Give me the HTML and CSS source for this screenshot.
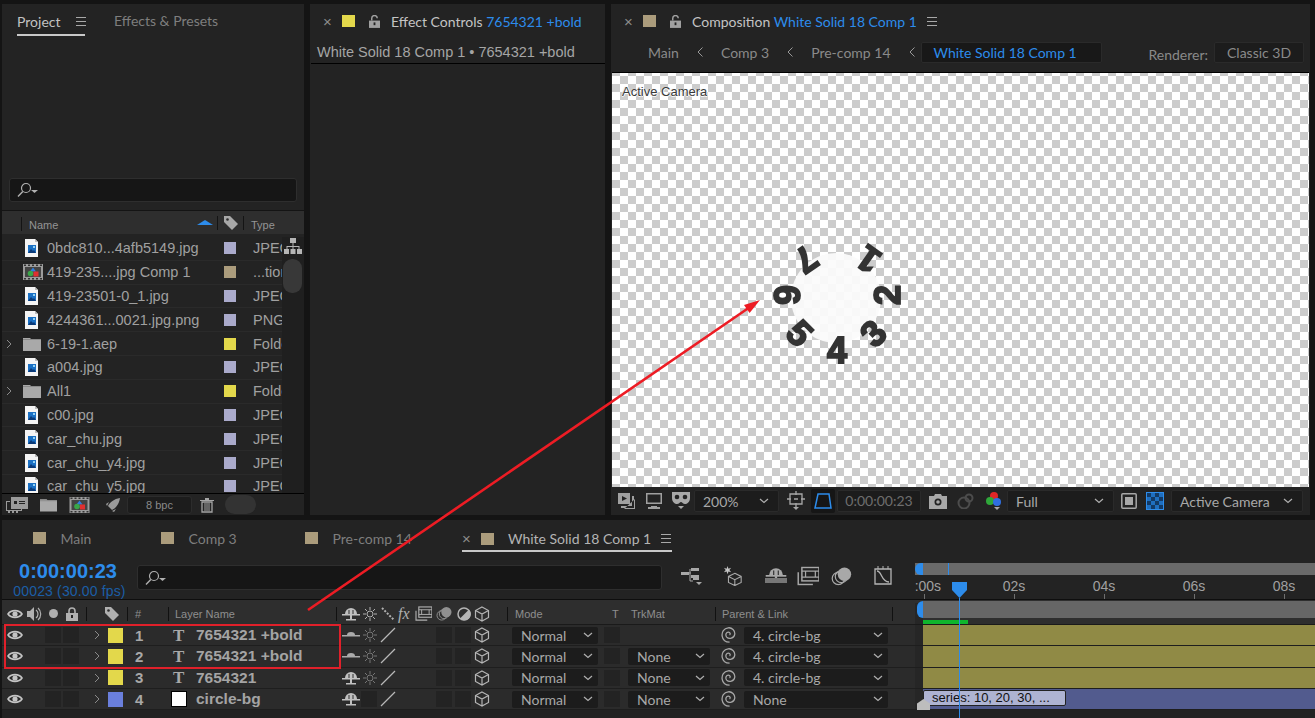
FILE: index.html
```html
<!DOCTYPE html>
<html lang="en">
<head>
  <meta charset="UTF-8">
  <title>White Solid 18 Comp 1</title>
  <link rel="stylesheet" href="styles.css">
</head>
<body>

  <!-- shared icons -->
  <svg class="defs" width="0" height="0">
    <symbol id="i-eye" viewBox="0 0 16 16"><path d="M1 8C4 3.5 12 3.5 15 8 12 12.5 4 12.5 1 8Z" fill="none" stroke="currentColor" stroke-width="1.6"/><circle cx="8" cy="8" r="2.6" fill="currentColor"/></symbol>
    <symbol id="i-chev" viewBox="0 0 8 12"><path d="M2 2l4 4-4 4" fill="none" stroke="currentColor" stroke-width="1"/></symbol>
    <symbol id="i-down" viewBox="0 0 12 8"><path d="M2 2l4 3.5L10 2" fill="none" stroke="currentColor" stroke-width="1.2"/></symbol>
    <symbol id="i-file" viewBox="0 0 13 18"><path d="M0 0h10l3 3v15H0z" fill="#f4f4f4"/><path d="M10 0v3h3z" fill="#bbb"/><rect x="3" y="6" width="8" height="8" fill="#1a70c4"/><path d="M3 14l3-4 2 2 1-1 2 3z" fill="#0b3a78"/><rect x="8" y="7" width="2" height="2" fill="#8fd0f5"/></symbol>
    <symbol id="i-folder" viewBox="0 0 18 14"><path d="M0 2V1h7l1 1h10v12H0z" fill="#a9a9a9"/><rect y="2" width="18" height="1" fill="#8b8b8b"/></symbol>
    <symbol id="i-comp" viewBox="0 0 20 16"><rect width="20" height="16" fill="#9c9c9c"/><path d="M1 .5h2v1.500H1zM5 .5h2v1.500H5zM9 .5h2v1.500H9zM13 .5h2v1.500h-2zM17 .5h2v1.500h-2zM1 14h2v1.500H1zM5 14h2v1.500H5zM9 14h2v1.500H9zM13 14h2v1.500h-2zM17 14h2v1.500h-2z" fill="#333"/><rect x="2" y="3" width="16" height="10" fill="#444"/><path d="M10 3.500l3 4H7z" fill="#2f7fe0"/><circle cx="7.500" cy="9.500" r="2.800" fill="#3aa648"/><rect x="10.500" y="7.500" width="5" height="5" fill="#e03030"/></symbol>
    <symbol id="i-lock" viewBox="0 0 12 14"><path d="M3 6V4a3 3 0 0 1 6 0v2" fill="none" stroke="currentColor" stroke-width="1.6"/><path d="M0 6h12v8H0z" fill="currentColor"/><rect x="5" y="8" width="2" height="3" fill="#232323"/></symbol>
    <symbol id="i-unlock" viewBox="0 0 12 14"><path d="M3 6V3.5a3 3 0 0 1 6 0" fill="none" stroke="currentColor" stroke-width="1.6"/><path d="M0 6h12v8H0z" fill="currentColor"/><rect x="5" y="8" width="2" height="3" fill="#232323"/></symbol>
    <symbol id="i-tag" viewBox="0 0 16 16"><path d="M1 1h6l8 8-6 6-8-8z" fill="currentColor"/><circle cx="4.500" cy="4.500" r="1.300" fill="#2e2e2e"/></symbol>
    <symbol id="i-search" viewBox="0 0 22 16"><circle cx="9" cy="6" r="4.500" fill="none" stroke="currentColor" stroke-width="1.200"/><path d="M5.800 9.400L1 14.500" stroke="currentColor" stroke-width="1.400"/><path d="M14 8h7l-3.500 3z" fill="currentColor"/></symbol>
    <symbol id="i-shy" viewBox="0 0 18 14"><path d="M3 7a6 6 0 0 1 12 0z" fill="currentColor"/><path d="M7 3v4M11 3v4" stroke="#2e2e2e"/><rect y="7" width="18" height="1.500" fill="currentColor"/><rect x="8" y="8" width="2" height="4" fill="currentColor"/><rect x="4" y="12" width="10" height="1.500" fill="currentColor"/></symbol>
    <symbol id="i-shyoff" viewBox="0 0 18 14"><path d="M5 7a4 3 0 0 1 8 0z" fill="currentColor"/><rect y="7" width="18" height="1.500" fill="currentColor"/></symbol>
    <symbol id="i-sun" viewBox="0 0 14 14"><circle cx="7" cy="7" r="3" fill="none" stroke="currentColor"/><path d="M7 0v3M7 11v3M0 7h3M11 7h3M2 2l2 2M10 10l2 2M12 2l-2 2M4 10l-2 2" stroke="currentColor"/></symbol>
    <symbol id="i-slash" viewBox="0 0 16 16"><path d="M1 15L15 1" stroke="currentColor" stroke-width="1.300"/></symbol>
    <symbol id="i-cube" viewBox="0 0 16 16"><path d="M8 1l6.500 3.500v7L8 15l-6.500-3.500v-7zM1.500 4.500L8 8l6.500-3.500M8 8v7" fill="none" stroke="currentColor" stroke-width="1.200"/></symbol>
    <symbol id="i-spiral" viewBox="1 1.500 13 14"><path d="M8 8.500c1-.8.500-2.500-1-2.500-2 0-3 2.500-1.500 4.300C7.500 12.500 12 11.500 12.500 8 13 4.500 10 1.800 6.800 2.200 3 2.700 1 6 1.500 9.500 2 12.500 4.500 14.800 8 14.800" fill="none" stroke="currentColor" stroke-width="1.100"/></symbol>
    <symbol id="i-stack" viewBox="0 0 18 16"><circle cx="6" cy="10" r="5" fill="none" stroke="currentColor"/><circle cx="8.500" cy="8.500" r="5" fill="none" stroke="currentColor"/><circle cx="11" cy="6.500" r="5.500" fill="currentColor"/></symbol>
    <symbol id="i-film" viewBox="0 0 18 16"><rect x="4" y="1" width="14" height="11" fill="none" stroke="currentColor" stroke-width="1.200"/><path d="M4 4h14M4 9h14M7 4v5M15 4v5" stroke="currentColor"/><path d="M1 5v10h12" fill="none" stroke="currentColor" stroke-width="1.200"/></symbol>
    <symbol id="burger" viewBox="0 0 10 9"><path d="M0 0h10v1H0zM0 4h10v1H0zM0 8h10v1H0z" fill="#a8a8a8"/></symbol>
    <symbol id="i-back" viewBox="0 0 8 12"><path d="M6.500 1.500L2 6l4.500 4.500" fill="none" stroke="currentColor"/></symbol>
  </svg>

  <main class="top">

    <section class="panel project">
      <div class="project-tabs">
        <span class="tab-active">Project <svg class="burger"><use href="#burger"/></svg></span>
        <span class="tab-off">Effects &amp; Presets</span>
      </div>
      <div class="search project-search"><svg class="i-search"><use href="#i-search"/></svg></div>
      <div class="list-head">
        <span class="head-name">Name</span>
        <span class="sort-arrow"></span>
        <i class="head-sep"></i>
        <svg class="i-tag"><use href="#i-tag"/></svg>
        <i class="head-sep"></i>
        <span class="head-type">Type</span>
      </div>
      <div class="list-wrap">
        <div class="list">
          <div class="item"><span></span><svg class="i-file"><use href="#i-file"/></svg><span>0bdc810...4afb5149.jpg</span><i class="chip c-lav"></i><span>JPEG</span></div>
          <div class="item"><span></span><svg class="i-comp"><use href="#i-comp"/></svg><span>419-235....jpg Comp 1</span><i class="chip c-tan"></i><span>...tion</span></div>
          <div class="item"><span></span><svg class="i-file"><use href="#i-file"/></svg><span>419-23501-0_1.jpg</span><i class="chip c-lav"></i><span>JPEG</span></div>
          <div class="item"><span></span><svg class="i-file"><use href="#i-file"/></svg><span>4244361...0021.jpg.png</span><i class="chip c-lav"></i><span>PNG</span></div>
          <div class="item"><svg class="i-chev"><use href="#i-chev"/></svg><svg class="i-folder"><use href="#i-folder"/></svg><span>6-19-1.aep</span><i class="chip c-yel"></i><span>Folder</span></div>
          <div class="item"><span></span><svg class="i-file"><use href="#i-file"/></svg><span>a004.jpg</span><i class="chip c-lav"></i><span>JPEG</span></div>
          <div class="item"><svg class="i-chev"><use href="#i-chev"/></svg><svg class="i-folder"><use href="#i-folder"/></svg><span>All1</span><i class="chip c-yel"></i><span>Folder</span></div>
          <div class="item"><span></span><svg class="i-file"><use href="#i-file"/></svg><span>c00.jpg</span><i class="chip c-lav"></i><span>JPEG</span></div>
          <div class="item"><span></span><svg class="i-file"><use href="#i-file"/></svg><span>car_chu.jpg</span><i class="chip c-lav"></i><span>JPEG</span></div>
          <div class="item"><span></span><svg class="i-file"><use href="#i-file"/></svg><span>car_chu_y4.jpg</span><i class="chip c-lav"></i><span>JPEG</span></div>
          <div class="item"><span></span><svg class="i-file"><use href="#i-file"/></svg><span>car_chu_y5.jpg</span><i class="chip c-lav"></i><span>JPEG</span></div>
        </div>
        <div class="side">
          <svg class="i-flow" viewBox="0 0 18 16"><path d="M6 0h6v5H6zM0 11h5v5H0zM6.500 11h5v5h-5zM13 11h5v5h-5zM8.500 5h1v3h6v3h-1V9h-5v2h-1V9h-5v2h-1V8h6z" fill="#b5b5b5"/></svg>
          <div class="thumb"></div>
        </div>
      </div>
      <div class="project-foot">
        <svg class="i-interp" viewBox="0 0 22 16"><path d="M5 0h17v12H5z" fill="#9a9a9a"/><path d="M8 4h3v3H8zM13 4h6v1h-6zM13 6h6v1h-6z" fill="#232323"/><path d="M0 4h4v1H1v8h14v-1h1v2H0z M2 14h2v2H2zM6 14h2v2H6zM10 14h2v2h-2z" fill="#9a9a9a"/></svg>
        <svg class="i-folder foot-folder"><use href="#i-folder"/></svg>
        <svg class="i-comp foot-comp"><use href="#i-comp"/></svg>
        <svg class="i-rocket" viewBox="0 0 16 16"><path d="M15 1C9 2 5 5 3 9l4 4c4-2 7-6 8-12zM1 7l3-2-2 4zM9 15l2-3-4 2z" fill="#9a9a9a"/></svg>
        <span class="bpc">8 bpc</span>
        <svg class="i-trash" viewBox="0 0 14 16"><path d="M0 3h14v1H0zM5 1h4v2H5z" fill="#a5a5a5"/><path d="M2 5h10v10H2z" fill="none" stroke="#a5a5a5" stroke-width="1.300"/><path d="M5 6v8M7 6v8M9 6v8" stroke="#a5a5a5"/></svg>
        <span class="pill"></span>
      </div>
    </section>

    <section class="panel effect">
      <div class="tab-row">
        <span class="close">×</span>
        <i class="chip-lg c-yel"></i>
        <svg class="i-lock-tab"><use href="#i-unlock"/></svg>
        <span class="tab-title">Effect Controls <b>7654321 +bold</b></span>
      </div>
      <div class="effect-sub">White Solid 18 Comp 1 • 7654321 +bold</div>
    </section>

    <section class="panel comp">
      <div class="tab-row">
        <span class="close">×</span>
        <i class="chip-lg c-tan"></i>
        <svg class="i-lock-tab"><use href="#i-unlock"/></svg>
        <span class="tab-title">Composition <b>White Solid 18 Comp 1</b></span>
        <svg class="burger comp-burger"><use href="#burger"/></svg>
      </div>
      <div class="crumbs">
        <span>Main</span><svg class="back"><use href="#i-back"/></svg>
        <span>Comp 3</span><svg class="back"><use href="#i-back"/></svg>
        <span>Pre-comp 14</span><svg class="back"><use href="#i-back"/></svg>
        <span class="crumb-on">White Solid 18 Comp 1</span>
        <span class="renderer">Renderer:</span>
        <span class="renderer-box">Classic 3D</span>
      </div>
      <div class="viewer">
        <span class="cam-label">Active Camera</span>
        <svg class="stage" viewBox="0 0 697 414">
          <circle cx="224" cy="225" r="45" fill="#fbfbfb" opacity=".93"/>
          <g class="digits">
            <text y="13" transform="translate(194 187) rotate(145)">7</text>
            <text y="13" transform="translate(256 187) rotate(-145)">1</text>
            <text y="13" transform="translate(275 222) rotate(-90)">2</text>
            <text y="13" transform="translate(261 260) rotate(-45)">3</text>
            <text y="13" transform="translate(225 277)">4</text>
            <text y="13" transform="translate(188 260) rotate(45)">5</text>
            <text y="13" transform="translate(175 222) rotate(90)">6</text>
          </g>
        </svg>
      </div>
      <div class="viewer-bar">
        <svg class="vb-icon i-a" viewBox="0 0 18 16"><path d="M0 0h12v11H0z" fill="#a0a0a0"/><path d="M4 3l5 2.500L4 8z" fill="#232323"/><path d="M14 3v10H3v2h13V3zM17 6v10H6" fill="#a0a0a0"/></svg>
        <svg class="vb-icon i-b" viewBox="0 0 18 16"><path d="M1 0h16v11H1zM6 13h6v1H6zM3 14h12v2H3z" fill="#a0a0a0"/><rect x="2.500" y="1.500" width="13" height="8" fill="#232323"/></svg>
        <svg class="vb-icon i-c" viewBox="0 0 20 18"><path d="M1 0h18v6c0 4-3 6-5 6-2 0-3-2-4-2s-2 2-4 2c-2 0-5-2-5-6z" fill="#a8a8a8"/><circle cx="6" cy="5" r="2.300" fill="#232323"/><circle cx="14" cy="5" r="2.300" fill="#232323"/><path d="M7 14h6l-3 3z" fill="#a8a8a8"/></svg>
        <span class="sel zoom-sel">200%<svg class="i-down"><use href="#i-down"/></svg></span>
        <svg class="vb-icon i-d" viewBox="0 0 18 20"><path d="M3 3h12v10H3zM9 0v4M9 12v4M0 8h4M14 8h4M7 8h4" fill="none" stroke="#a8a8a8" stroke-width="1.300"/><path d="M6 16h6l-3 3z" fill="#a8a8a8"/></svg>
        <span class="mask-btn"><svg viewBox="0 0 18 18"><path d="M4 2h11l2 14H1z" fill="none" stroke="#2d8ceb" stroke-width="1.500"/></svg></span>
        <span class="timecode-box">0:00:00:23</span>
        <svg class="vb-icon i-e" viewBox="0 0 18 16"><path d="M0 3h5l1-2h6l1 2h5v13H0z" fill="#a8a8a8"/><circle cx="9" cy="9" r="3.500" fill="#232323"/><circle cx="9" cy="9" r="1.800" fill="#a8a8a8"/></svg>
        <svg class="vb-icon i-f" viewBox="0 0 18 16"><circle cx="7" cy="10" r="5.500" fill="none" stroke="#4c4c4c" stroke-width="2"/><circle cx="12" cy="5" r="3.500" fill="none" stroke="#4c4c4c" stroke-width="2"/></svg>
        <svg class="vb-icon i-g" viewBox="0 0 18 20"><circle cx="9" cy="5" r="4" fill="#e02727"/><circle cx="5" cy="10" r="4" fill="#2fa83a"/><circle cx="12" cy="11" r="4" fill="#2f6fe0"/><path d="M9 16h6l-3 3z" fill="#a8a8a8"/></svg>
        <span class="sel full-sel">Full<svg class="i-down"><use href="#i-down"/></svg></span>
        <svg class="vb-icon i-h" viewBox="0 0 16 16"><rect x=".8" y=".8" width="14.400" height="14.400" rx="1" fill="none" stroke="#a8a8a8" stroke-width="1.500"/><rect x="4" y="4" width="8" height="8" fill="#a8a8a8"/></svg>
        <span class="checker-btn"></span>
        <span class="sel cam-sel">Active Camera<svg class="i-down"><use href="#i-down"/></svg></span>
      </div>
    </section>
  </main>

  <section class="timeline">
    <div class="tl-tabs">
      <span class="tl-tab"><i class="chip-lg c-tan"></i>Main</span>
      <span class="tl-tab"><i class="chip-lg c-tan"></i>Comp 3</span>
      <span class="tl-tab"><i class="chip-lg c-tan"></i>Pre-comp 14</span>
      <span class="tl-tab-on"><span class="close">×</span><i class="chip-lg c-tan"></i>White Solid 18 Comp 1<svg class="burger"><use href="#burger"/></svg></span>
    </div>

    <div class="tl-ctrl">
      <div class="tl-left">
        <div class="tc">
          <div class="tc-main">0:00:00:23</div>
          <div class="tc-sub">00023 (30.00 fps)</div>
        </div>
        <div class="search tl-search"><svg class="i-search"><use href="#i-search"/></svg></div>
        <div class="tl-tools">
          <svg viewBox="0 0 22 18"><path d="M0 5h8v3H0zM10 1h8v3h-8zM10 8h8v3h-8zM12 13h6v-2h-6z" fill="#a8a8a8"/><path d="M8 6h2M9 2v12h3" fill="none" stroke="#a8a8a8"/><path d="M15 15h6l-3 3z" fill="#a8a8a8"/></svg>
          <svg viewBox="0 0 22 22"><path d="M13 8l7 3.500v6.500L13 21.500 6 18v-6.500zM6 11.500l7 3.500 7-3.500M13 15v6.500" fill="none" stroke="#a8a8a8" stroke-width="1.200"/><path d="M5 0l1 3 3-1-2 2.500 2 2.500-3-1-1 3-1-3-3 1 2-2.500L1 2l3 1z" fill="#c4c4c4"/></svg>
          <svg viewBox="0 0 22 18"><use href="#i-shy" x="0" y="0" width="22" height="16" color="#a8a8a8"/><rect x="0" y="11" width="22" height="5" fill="#777"/></svg>
          <svg viewBox="0 0 18 16"><use href="#i-film" color="#a8a8a8"/></svg>
          <svg viewBox="0 0 18 16"><use href="#i-stack" color="#a8a8a8"/></svg>
          <svg viewBox="0 0 20 20"><path d="M2 3h16v15H2z" fill="none" stroke="#b5b5b5" stroke-width="1.300"/><path d="M4 5c5 0 4 11 12 11" fill="none" stroke="#b5b5b5" stroke-width="1.300"/><path d="M5 0v3M10 0v3M15 0v3" stroke="#b5b5b5"/></svg>
        </div>
      </div>
      <div class="ruler">
        <div class="nav-bar"><i class="nav-cap"></i><i class="nav-mark"></i></div>
        <div class="ticks">
          <span class="tick">0:00s</span><span class="tick">02s</span><span class="tick">04s</span><span class="tick">06s</span><span class="tick">08s</span>
        </div>
      </div>
    </div>

    <div class="cols head">
      <svg class="ic"><use href="#i-eye"/></svg>
      <svg class="ic-speaker" viewBox="0 0 16 16"><path d="M1 5h3l4-4v14l-4-4H1z" fill="#b0b0b0"/><path d="M10 4a5 5 0 0 1 0 8M12 2a8 8 0 0 1 0 12" fill="none" stroke="#b0b0b0" stroke-width="1.200"/></svg>
      <span class="head-dot"></span>
      <svg class="ic-lock"><use href="#i-lock"/></svg>
      <span class="divider"></span>
      <svg class="i-tag head-tag"><use href="#i-tag"/></svg>
      <span class="head-num">#</span>
      <span class="head-layer">Layer Name</span>
      <svg class="ic-shy"><use href="#i-shy"/></svg>
      <svg class="ic-sun"><use href="#i-sun"/></svg>
      <span class="head-trio">
        <svg class="ic-blur" viewBox="0 0 14 14"><path d="M1 1l12 12" stroke="#b0b0b0" stroke-width="2" stroke-dasharray="2 1.500"/></svg>
        <em>fx</em>
        <svg class="ic-film"><use href="#i-film"/></svg>
      </span>
      <svg class="ic-stack"><use href="#i-stack"/></svg>
      <svg class="ic-half" viewBox="0 0 14 14"><circle cx="7" cy="7" r="6" fill="none" stroke="#b5b5b5" stroke-width="1.500"/><path d="M12 2.500A6 6 0 0 1 3 11.500z" fill="#b5b5b5"/></svg>
      <svg class="ic-cube"><use href="#i-cube"/></svg>
      <span class="head-text head-mode">Mode</span>
      <span class="head-text head-t">T</span>
      <span class="head-text">TrkMat</span>
      <span class="head-text head-parent">Parent &amp; Link</span>
      <span class="spacer"></span>
      <div class="track"><div class="work"><i class="work-cap"></i></div><div class="green"></div></div>
    </div>

    <div class="cols row">
      <svg class="ic box-bg"><use href="#i-eye"/></svg><span></span><i class="box"></i><i class="box"></i>
      <svg class="i-chev row-chev"><use href="#i-chev"/></svg><i class="chip-label c-yel"></i><span class="num">1</span><span class="t-ic">T</span><span class="name">7654321 +bold</span>
      <svg class="ic-shy dim"><use href="#i-shyoff"/></svg><svg class="ic-sun dim"><use href="#i-sun"/></svg><span class="sw-slash"><svg><use href="#i-slash"/></svg></span><i class="box"></i><i class="box"></i><svg class="ic-cube"><use href="#i-cube"/></svg>
      <span class="sel mode">Normal<svg class="i-down"><use href="#i-down"/></svg></span><i class="box"></i><span></span>
      <svg class="ic-spiral"><use href="#i-spiral"/></svg><span class="sel parent">4. circle-bg<svg class="i-down"><use href="#i-down"/></svg></span>
      <span class="spacer"></span><div class="track"><div class="bar"></div></div>
    </div>

    <div class="cols row">
      <svg class="ic box-bg"><use href="#i-eye"/></svg><span></span><i class="box"></i><i class="box"></i>
      <svg class="i-chev row-chev"><use href="#i-chev"/></svg><i class="chip-label c-yel"></i><span class="num">2</span><span class="t-ic">T</span><span class="name">7654321 +bold</span>
      <svg class="ic-shy dim"><use href="#i-shyoff"/></svg><svg class="ic-sun dim"><use href="#i-sun"/></svg><span class="sw-slash"><svg><use href="#i-slash"/></svg></span><i class="box"></i><i class="box"></i><svg class="ic-cube"><use href="#i-cube"/></svg>
      <span class="sel mode">Normal<svg class="i-down"><use href="#i-down"/></svg></span><i class="box"></i><span class="sel trk">None<svg class="i-down"><use href="#i-down"/></svg></span>
      <svg class="ic-spiral"><use href="#i-spiral"/></svg><span class="sel parent">4. circle-bg<svg class="i-down"><use href="#i-down"/></svg></span>
      <span class="spacer"></span><div class="track"><div class="bar"></div></div>
    </div>

    <div class="cols row">
      <svg class="ic box-bg"><use href="#i-eye"/></svg><span></span><i class="box"></i><i class="box"></i>
      <svg class="i-chev row-chev"><use href="#i-chev"/></svg><i class="chip-label c-yel"></i><span class="num">3</span><span class="t-ic">T</span><span class="name">7654321</span>
      <svg class="ic-shy"><use href="#i-shy"/></svg><svg class="ic-sun dim"><use href="#i-sun"/></svg><span class="sw-slash"><svg><use href="#i-slash"/></svg></span><i class="box"></i><i class="box"></i><svg class="ic-cube"><use href="#i-cube"/></svg>
      <span class="sel mode">Normal<svg class="i-down"><use href="#i-down"/></svg></span><i class="box"></i><span class="sel trk">None<svg class="i-down"><use href="#i-down"/></svg></span>
      <svg class="ic-spiral"><use href="#i-spiral"/></svg><span class="sel parent">4. circle-bg<svg class="i-down"><use href="#i-down"/></svg></span>
      <span class="spacer"></span><div class="track"><div class="bar"></div></div>
    </div>

    <div class="cols row">
      <svg class="ic box-bg"><use href="#i-eye"/></svg><span></span><i class="box"></i><i class="box"></i>
      <svg class="i-chev row-chev"><use href="#i-chev"/></svg><i class="chip-label c-blue"></i><span class="num">4</span><i class="solid-ic"></i><span class="name">circle-bg</span>
      <svg class="ic-shy"><use href="#i-shy"/></svg><i class="box"></i><span class="sw-slash"><svg><use href="#i-slash"/></svg></span><i class="box"></i><i class="box"></i><svg class="ic-cube"><use href="#i-cube"/></svg>
      <span class="sel mode">Normal<svg class="i-down"><use href="#i-down"/></svg></span><i class="box"></i><span class="sel trk">None<svg class="i-down"><use href="#i-down"/></svg></span>
      <svg class="ic-spiral"><use href="#i-spiral"/></svg><span class="sel parent">None<svg class="i-down"><use href="#i-down"/></svg></span>
      <span class="spacer"></span><div class="track"><div class="bar bar-blue"><span class="bar-label">series: 10, 20, 30, ...</span></div><i class="marker"></i></div>
    </div>

    <div class="playhead"></div>
  </section>

  <!-- red annotation drawn on top of the screenshot -->
  <svg class="annot" viewBox="0 0 1315 718">
    <path d="M308 610L750 307" stroke="#ed1c24" stroke-width="2.600" fill="none"/>
    <path d="M760 300L749.600 313.100 744 304.900z" fill="#ed1c24"/>
    <rect x="5" y="625" width="335" height="43" fill="none" stroke="#e0202a" stroke-width="2"/>
  </svg>

</body>
</html>
```

FILE: styles.css
```css
* {
  box-sizing: border-box;
}
body {
  margin: 0;
  width: 1315px;
  height: 718px;
  overflow: hidden;
  position: relative;
  background: #141414;
  font-family: Lato, "Noto Sans", sans-serif;
  font-size: 14px;
  color: #a0a0a0;
}
svg {
  display: block;
  flex: none;
}
i {
  display: block;
  flex: none;
}
.defs {
  position: absolute;
}

/* colour labels */
.c-lav { background: #aaaacb; }
.c-tan { background: #ab9c7c; }
.c-yel { background: #e3d84b; }
.c-blue { background: #6a7fdc; }

/* top row */
.top {
  display: grid;
  grid-template-columns: 302px 295px 699px;
  gap: 6px;
  height: 511px;
  margin: 4px 0 0 2px;
}
.panel {
  background: #232323;
  min-width: 0;
  display: flex;
  flex-direction: column;
}
.burger {
  width: 10px;
  height: 9px;
}

/* project panel */
.project-tabs {
  display: flex;
  align-items: flex-start;
  gap: 29px;
  height: 174px;
  padding: 7px 0 0 15px;
}
.tab-active {
  display: flex;
  align-items: center;
  gap: 16px;
  height: 21px;
  width: 68px;
  color: #c2c2c2;
  border-bottom: 2px solid #c8c8c8;
  padding-bottom: 2px;
  box-sizing: content-box;
}
.tab-off {
  color: #7e7e7e;
  padding-top: 1px;
}
.search {
  background: #161616;
  border: 1px solid #2e2e2e;
  border-radius: 3px;
  color: #b0b0b0;
  display: flex;
  align-items: center;
  padding-left: 7px;
}
.i-search {
  width: 22px;
  height: 16px;
}
.project-search {
  height: 24px;
  margin: 0 7px;
}
.list-head {
  display: flex;
  align-items: center;
  height: 24px;
  margin-top: 8px;
  background: #2e2e2e;
  border-top: 1px solid #141414;
  font-family: "Liberation Sans", sans-serif;
  font-size: 11px;
  color: #949494;
  padding-left: 19px;
}
.head-name {
  width: 176px;
  height: 14px;
  border-left: 1px solid #141414;
  padding: 2px 0 0 7px;
  margin-top: 3px;
}
.sort-arrow {
  width: 0;
  height: 0;
  border-left: 8px solid transparent;
  border-right: 8px solid transparent;
  border-bottom: 5px solid #2d8ceb;
  margin-right: 4px;
}
.head-sep {
  width: 1px;
  height: 14px;
  background: #141414;
  margin-right: 5px;
}
.list-head .i-tag {
  width: 16px;
  height: 16px;
  color: #a8a8a8;
  margin-right: 4px;
}
.head-type {
  margin-left: 2px;
  padding-top: 5px;
}
.list-wrap {
  display: flex;
  height: 260px;
  overflow: hidden;
  border-bottom: 1px solid #000;
  padding-top: 3px;
}
.list {
  width: 280px;
  overflow: hidden;
}
.item {
  display: grid;
  grid-template-columns: 21px 24px 177px 29px 1fr;
  align-items: center;
  height: 23.8px;
  border-bottom: 1px solid #2a2a2a;
  font-family: "Liberation Sans", sans-serif;
  font-size: 14.5px;
  white-space: nowrap;
  overflow: hidden;
}
.item > span:last-child {
  overflow: hidden;
}
.i-file {
  width: 13px;
  height: 18px;
  margin-left: 2px;
}
.i-comp {
  width: 20px;
  height: 16px;
}
.i-folder {
  width: 18px;
  height: 14px;
}
.i-chev {
  width: 8px;
  height: 12px;
  color: #8a8a8a;
  margin-left: 3px;
}
.chip {
  width: 12px;
  height: 12px;
}
.side {
  flex: 1;
  background: #1f1f1f;
  padding: 1px 1px;
}
.i-flow {
  width: 18px;
  height: 16px;
  margin: 0 0 5px 1px;
}
.thumb {
  width: 19px;
  height: 34px;
  border-radius: 9px;
  background: #383838;
}
.project-foot {
  display: flex;
  align-items: center;
  flex: 1;
  padding-left: 4px;
}
.i-interp {
  width: 22px;
  height: 16px;
}
.foot-folder {
  width: 17px;
  height: 14px;
  margin-left: 12px;
}
.foot-comp {
  width: 21px;
  height: 16px;
  margin-left: 12px;
}
.i-rocket {
  width: 16px;
  height: 16px;
  margin-left: 15px;
}
.bpc {
  width: 65px;
  height: 18px;
  margin-left: 6px;
  border: 1px solid #2c2c2c;
  border-radius: 3px;
  background: #1c1c1c;
  color: #8a8a8a;
  font-family: "Liberation Sans", sans-serif;
  font-size: 11px;
  line-height: 16px;
  text-align: center;
}
.i-trash {
  width: 14px;
  height: 16px;
  margin-left: 8px;
}
.pill {
  width: 31px;
  height: 19px;
  border-radius: 10px;
  background: #333;
  margin-left: 11px;
}

/* panel tabs */
.tab-row {
  display: flex;
  align-items: center;
  height: 34px;
  flex: none;
  padding-left: 13px;
  white-space: nowrap;
}
.close {
  width: 19px;
  color: #8c8c8c;
  font-size: 15px;
  font-family: "Liberation Sans", sans-serif;
}
.chip-lg {
  width: 13px;
  height: 12px;
  margin-right: 14px;
}
.i-lock-tab {
  width: 11px;
  height: 13px;
  color: #a0a0a0;
  margin-right: 11px;
}
.tab-title {
  color: #c4c4c4;
}
.tab-title b {
  font-weight: 400;
  color: #2d8ceb;
}
.effect-sub {
  height: 26px;
  margin-left: 1px;
  padding: 3px 0 0 6px;
  border-bottom: 1px solid #000;
  font-family: "Liberation Sans", sans-serif;
  font-size: 14.5px;
  color: #a5a5a5;
  line-height: 22px;
}

/* composition panel */
.comp-burger {
  margin-left: 10px;
}
.crumbs {
  display: flex;
  align-items: center;
  height: 34px;
  flex: none;
  padding-left: 37px;
  color: #8a8a8a;
  white-space: nowrap;
  padding-bottom: 6px;
}
.back {
  width: 8px;
  height: 12px;
  margin: 0 17px;
  color: #999;
}
.crumb-on {
  width: 181px;
  height: 21px;
  margin-left: -12px;
  padding-left: 12px;
  background: #181818;
  border: 1px solid #2a2a2a;
  border-radius: 2px;
  color: #2d8ceb;
  line-height: 19px;
}
.renderer {
  margin-left: 47px;
  margin-top: 4px;
}
.renderer-box {
  width: 90px;
  height: 21px;
  margin-left: 6px;
  background: #1c1c1c;
  border: 1px solid #2a2a2a;
  border-radius: 2px;
  text-align: center;
  line-height: 19px;
}
.viewer {
  position: relative;
  height: 415px;
  margin: 0 1px;
  flex: none;
  background: repeating-conic-gradient(#cccccc 0 25%, #ffffff 0 50%) 0 3px / 16px 16px;
  border-top: 1px solid #000;
}
.cam-label {
  position: absolute;
  left: 10px;
  top: 11px;
  font-family: "Liberation Sans", sans-serif;
  font-size: 13px;
  color: #3a3a3a;
  text-shadow: 1px 0 0 #fff, 0 1px 0 #fff, -1px 0 1px #ddd;
}
.stage {
  position: absolute;
  left: 0;
  top: 0;
  width: 697px;
  height: 414px;
}
.digits {
  filter: blur(.5px);
}
.digits text {
  font-family: "Liberation Sans", sans-serif;
  font-weight: 700;
  font-size: 36px;
  text-anchor: middle;
  fill: #333;
  stroke: #333;
  stroke-width: 1.800;
}
.viewer-bar {
  display: flex;
  align-items: center;
  flex: 1;
  padding-left: 7px;
}
.vb-icon {
  flex: none;
}
.i-a { width: 18px; height: 16px; }
.i-b { width: 18px; height: 16px; margin-left: 9px; }
.i-c { width: 20px; height: 18px; margin-left: 8px; }
.sel {
  display: flex;
  align-items: center;
  justify-content: space-between;
  background: #1c1c1c;
  color: #a8a8a8;
  white-space: nowrap;
  border-radius: 2px;
}
.i-down {
  width: 12px;
  height: 8px;
  color: #b0b0b0;
}
.viewer-bar .sel {
  height: 22px;
  border: 1px solid #2a2a2a;
  padding: 0 8px;
}
.zoom-sel { width: 85px; margin-left: 3px; }
.i-d { width: 18px; height: 20px; margin-left: 8px; }
.mask-btn {
  width: 24px;
  height: 24px;
  padding: 3px;
  margin-left: 6px;
  background: #161616;
  border-radius: 2px;
}
.timecode-box {
  width: 84px;
  height: 22px;
  margin-left: 2px;
  background: #1c1c1c;
  border: 1px solid #2a2a2a;
  border-radius: 2px;
  color: #6e6e6e;
  text-align: center;
  line-height: 20px;
}
.i-e { width: 18px; height: 16px; margin-left: 8px; }
.i-f { width: 18px; height: 16px; margin-left: 10px; }
.i-g { width: 18px; height: 20px; margin-left: 10px; }
.full-sel { width: 107px; margin-left: 4px; }
.i-h { width: 16px; height: 16px; margin-left: 7px; }
.checker-btn {
  width: 18px;
  height: 18px;
  margin-left: 9px;
  border: 1px solid #2d8ceb;
  background: repeating-conic-gradient(#1f6fc0 0 25%, #123a66 0 50%) 0 0 / 8px 8px;
}
.cam-sel { width: 132px; margin-left: 7px; }

/* timeline */
.timeline {
  position: relative;
  height: 198px;
  margin: 5px 0 0 2px;
  background: #232323;
}
.tl-tabs {
  display: flex;
  height: 33px;
  padding-top: 7px;
  white-space: nowrap;
}
.tl-tab {
  display: flex;
  align-items: center;
  height: 22px;
  color: #7e7e7e;
  margin-left: 31px;
  width: 97px;
}
.tl-tab:nth-child(2) { width: 113px; }
.tl-tab:nth-child(3) { width: 126px; }
.tl-tab .chip-lg {
  margin-right: 14.5px;
}
.tl-tab-on {
  display: flex;
  align-items: center;
  height: 25px;
  width: 210px;
  margin-left: 31px;
  color: #b4b4b4;
  border-bottom: 2px solid #c8c8c8;
}
.tl-tab-on .close {
  width: 19px;
}
.tl-tab-on .burger {
  margin-left: 10px;
}
.tl-ctrl {
  display: flex;
  height: 47px;
  border-bottom: 1px solid #0e0e0e;
}
.tl-left {
  display: flex;
  width: 913px;
  flex: none;
}
.tc {
  width: 135px;
  flex: none;
  text-align: center;
  font-family: "Liberation Sans", sans-serif;
  padding-top: 7px;
}
.tc-main {
  color: #2d8ceb;
  font-size: 20px;
  font-weight: 700;
  line-height: 22px;
  margin-left: -3px;
}
.tc-sub {
  color: #1b5ea6;
  font-size: 14px;
  letter-spacing: .15px;
  line-height: 15px;
  margin-top: 2px;
}
.tl-search {
  width: 525px;
  height: 25px;
  margin-top: 12px;
  flex: none;
}
.tl-tools {
  display: flex;
  align-items: center;
  padding-left: 19px;
}
.tl-tools svg {
  width: 22px;
  height: 20px;
}
.tl-tools svg:nth-child(2) { margin-left: 19px; }
.tl-tools svg:nth-child(3) { margin-left: 21px; }
.tl-tools svg:nth-child(4) { margin-left: 10px; }
.tl-tools svg:nth-child(5) { margin-left: 12px; }
.tl-tools svg:nth-child(6) { margin-left: 19px; }
.ruler {
  flex: 1;
  overflow: hidden;
  padding-top: 10px;
}
.nav-bar {
  display: flex;
  align-items: stretch;
  height: 12px;
  background: #6a6a6a;
}
.nav-cap {
  width: 8px;
  background: #2d8ceb;
  border-radius: 6px 0 0 6px;
}
.nav-mark {
  width: 1px;
  margin-left: 25px;
  background: #2d8ceb;
}
.ticks {
  display: flex;
  margin: 3px 0 0 -36px;
  font-family: "Liberation Sans", sans-serif;
  font-size: 14px;
  color: #a0a0a0;
}
.tick {
  flex: none;
  width: 90px;
  text-align: center;
  position: relative;
  height: 22px;
}
.tick::after {
  content: "";
  position: absolute;
  left: 45px;
  bottom: 0;
  width: 1px;
  height: 6px;
  background: #6e6e6e;
}

/* layer table: all rows share one set of columns */
.cols {
  display: grid;
  grid-template-columns: 5px 16px 22px 18px 16px 29px 27px 38px 23px 146px 19px 19px 56px 19px 18px 39px 92px 24px 92px 24px 171px 8px 1fr;
  align-items: center;
}
.cols > :first-child {
  grid-column: 2;
}
.head {
  height: 25px;
  padding-top: 3px;
  background: #2e2e2e;
  border-bottom: 1px solid #1a1a1a;
  font-family: "Liberation Sans", sans-serif;
  font-size: 11px;
  color: #8e8e8e;
}
.row {
  height: 21.33px;
  background: #2b2b2b;
  border-bottom: 1px solid #1e1e1e;
}
.ic {
  width: 16px;
  height: 16px;
  color: #c4c4c4;
}
.ic-speaker {
  width: 16px;
  height: 16px;
  margin-left: 3px;
}
.head-dot {
  width: 9px;
  height: 9px;
  border-radius: 50%;
  background: #b0b0b0;
  margin-left: 4px;
}
.ic-lock {
  width: 12px;
  height: 14px;
  color: #b0b0b0;
  margin-left: 3px;
}
.divider {
  width: 1px;
  height: 14px;
  background: #111;
  margin-left: 7px;
}
.head-tag {
  width: 16px;
  height: 16px;
  color: #b0b0b0;
  margin-left: -4px;
}
.head-num,
.head-layer,
.head-mode,
.head-parent {
  position: relative;
}
.head-num::before,
.head-num::after,
.head-layer::after,
.head-mode::before,
.head-parent::before,
.head-parent::after {
  content: "";
  position: absolute;
  top: -1px;
  width: 1px;
  height: 14px;
  background: #111;
}
.head-num::before { left: -8px; }
.head-num::after { left: 33px; }
.head-layer::after { right: 5px; }
.head-mode::before { left: -5px; }
.head-parent::before { left: -5px; }
.head-parent::after { right: 22px; }
.head-layer {
  grid-column: span 2;
  padding-left: 2px;
}
.ic-shy {
  width: 18px;
  height: 14px;
  color: #c0c0c0;
}
.ic-sun {
  width: 14px;
  height: 14px;
  color: #b0b0b0;
  margin-left: 2px;
}
.dim {
  color: #777;
}
.ic-shy.dim {
  color: #aaa;
}
.head-trio {
  display: flex;
  align-items: center;
  gap: 3px;
  padding-left: 1px;
}
.head-trio em {
  font-family: "Liberation Serif", serif;
  font-size: 16px;
  color: #b0b0b0;
  width: 14px;
}
.ic-blur {
  width: 14px;
  height: 14px;
}
.ic-film {
  width: 17px;
  height: 15px;
  color: #b0b0b0;
}
.ic-stack {
  width: 17px;
  height: 15px;
  color: #909090;
}
.ic-half {
  width: 14px;
  height: 14px;
  margin-left: 2px;
}
.ic-cube {
  width: 16px;
  height: 16px;
  color: #b5b5b5;
  margin-left: 1px;
}
.head-text {
  padding-left: 3px;
}
.head-t {
  padding-left: 8px;
}
.head-parent {
  grid-column: span 2;
  padding-left: 2px;
}
.spacer {
  align-self: stretch;
  background: #262626;
}
.box {
  width: 16px;
  height: 16px;
  background: #232323;
}
.row-chev {
  margin-left: 14px;
}
.chip-label {
  width: 15px;
  height: 15px;
}
.num {
  font-family: "Liberation Sans", sans-serif;
  font-weight: 700;
  font-size: 15px;
  color: #a8a8a8;
}
.t-ic {
  font-family: "Liberation Serif", serif;
  font-weight: 700;
  font-size: 17px;
  color: #a8a8a8;
  line-height: 1;
}
.solid-ic {
  width: 16px;
  height: 16px;
  background: #fff;
  border: 1px solid #000;
  margin-left: -2px;
}
.name {
  font-family: "Liberation Sans", sans-serif;
  font-weight: 700;
  font-size: 15.5px;
  color: #a4a4a4;
}
.sw-slash svg {
  width: 16px;
  height: 16px;
  color: #b8b8b8;
}
.row .sel {
  height: 17px;
  padding: 0 4px 0 9px;
  background: #1c1c1c;
}
.mode {
  width: 86px;
}
.trk {
  width: 82px;
}
.ic-spiral {
  width: 16px;
  height: 16px;
  color: #a8a8a8;
  margin-left: 1px;
}
.parent {
  width: 144px;
}

/* tracks */
.track {
  position: relative;
  align-self: stretch;
  min-width: 0;
}
.head .track {
  margin-top: -2px;
}
.work {
  height: 17px;
  background: #666;
}
.work-cap {
  position: absolute;
  left: -6px;
  top: 0;
  width: 6px;
  height: 17px;
  background: #2d8ceb;
  border-radius: 6px 0 0 6px;
}
.green {
  width: 45px;
  height: 4px;
  margin-top: 2px;
  background: #0fb52c;
}
.bar {
  height: 100%;
  background: #908a45;
}
.bar-blue {
  background: #525b8e;
  padding-top: 1px;
}
.bar-label {
  display: block;
  width: 143px;
  height: 16px;
  background: #aeb3d2;
  border: 1px solid #222;
  border-radius: 2px;
  color: #111;
  font-family: "Liberation Sans", sans-serif;
  font-size: 13px;
  line-height: 14px;
  padding-left: 8px;
  white-space: nowrap;
}
.marker {
  position: absolute;
  left: -6px;
  top: 10px;
  width: 13px;
  height: 11px;
  background: #bdbdbd;
  clip-path: polygon(50% 0, 100% 40%, 100% 100%, 0 100%, 0 40%);
}

/* current time indicator */
.playhead {
  position: absolute;
  left: 957px;
  top: 78px;
  bottom: 0;
  width: 1px;
  background: #2d8ceb;
}
.playhead::before {
  content: "";
  position: absolute;
  left: -7px;
  top: -16px;
  width: 15px;
  height: 16px;
  background: #2d8ceb;
  clip-path: polygon(0 0, 100% 0, 100% 50%, 50% 100%, 0 50%);
}

/* annotation overlay */
.annot {
  position: absolute;
  left: 0;
  top: 0;
  width: 1315px;
  height: 718px;
  pointer-events: none;
}
```
